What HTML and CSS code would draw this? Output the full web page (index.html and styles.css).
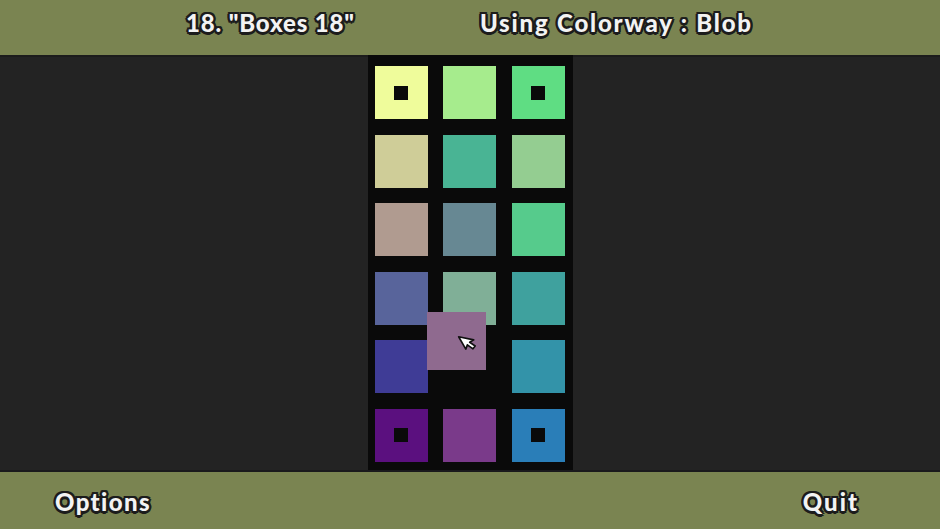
FILE: index.html
```html
<!DOCTYPE html>
<html>
<head>
<meta charset="utf-8">
<link rel="stylesheet" href="styles.css">
</head>
<body>
<div class="app">
  <header class="bar top">
    <span class="title">18. "Boxes 18"</span>
    <span class="colorway">Using Colorway : Blob</span>
  </header>
  <main class="stage">
    <div class="board">
      <div class="tile c11"><i class="dot"></i></div>
      <div class="tile c12"></div>
      <div class="tile c13"><i class="dot"></i></div>
      <div class="tile c21"></div>
      <div class="tile c22"></div>
      <div class="tile c23"></div>
      <div class="tile c31"></div>
      <div class="tile c32"></div>
      <div class="tile c33"></div>
      <div class="tile c41"></div>
      <div class="tile c42"></div>
      <div class="tile c43"></div>
      <div class="tile c51"></div>
      <div class="slot"></div>
      <div class="tile c53"></div>
      <div class="tile c61"><i class="dot"></i></div>
      <div class="tile c62"></div>
      <div class="tile c63"><i class="dot"></i></div>
      <div class="held">
        <svg class="cursor" width="20" height="22" viewBox="0 0 18 20">
          <path d="M2 1.5 L2 14.5 L5.2 11.8 L7.8 17.5 L10.8 16.3 L8.2 10.8 L12.5 10.8 Z" fill="#ffffff" stroke="#111" stroke-width="1.5" stroke-linejoin="round"/>
        </svg>
      </div>
    </div>
  </main>
  <footer class="bar bottom">
    <span class="opt">Options</span>
    <span class="quit">Quit</span>
  </footer>
</div>
</body>
</html>
```
FILE: styles.css
```css
* { box-sizing: border-box; }
html, body { margin: 0; padding: 0; }
body {
  width: 940px;
  height: 529px;
  overflow: hidden;
  background: #222222;
  font-family: "Lato", "DejaVu Sans", sans-serif;
}
.app {
  display: flex;
  flex-direction: column;
  width: 940px;
  height: 529px;
}
.bar {
  background: #7a8451;
  display: flex;
  align-items: center;
  color: #f3f3f3;
  font-weight: 900;
  font-size: 24px;
  text-shadow:
    2.5px 0 0 #1c1c1c, -2.5px 0 0 #1c1c1c, 0 2.5px 0 #1c1c1c, 0 -2.5px 0 #1c1c1c,
    1.8px 1.8px 0 #1c1c1c, -1.8px 1.8px 0 #1c1c1c, 1.8px -1.8px 0 #1c1c1c, -1.8px -1.8px 0 #1c1c1c;
}
.top {
  height: 55px;
  padding-left: 186px;
  padding-bottom: 10px;
}
.title { letter-spacing: 0.85px; }
.top .colorway { margin-left: 125px; letter-spacing: 1.8px; }
.stage {
  height: 417px;
  background: #232323;
  border-top: 2px solid #1c1c1c;
  border-bottom: 2px solid #1a1a1c;
  display: flex;
  justify-content: center;
  align-items: flex-start;
}
.board {
  position: relative;
  margin-top: -2px;
  width: 205px;
  height: 415px;
  background: #0a0a0a;
  padding: 11px 8px 8px 7px;
  display: grid;
  grid-template-columns: repeat(3, 53px);
  grid-template-rows: repeat(6, 53px);
  column-gap: 15.5px;
  row-gap: 15.6px;
}
.tile {
  display: flex;
  align-items: center;
  justify-content: center;
}
.dot {
  display: block;
  width: 14px;
  height: 14px;
  background: #0a0a0a;
}
.c11 { background: #effc9b; }
.c12 { background: #a6ec8d; }
.c13 { background: #5fdd83; }
.c21 { background: #cfcd98; }
.c22 { background: #49b494; }
.c23 { background: #94cd91; }
.c31 { background: #b09b90; }
.c32 { background: #678893; }
.c33 { background: #56cb8c; }
.c41 { background: #58649b; }
.c42 { background: #80af97; }
.c43 { background: #3fa19e; }
.c51 { background: #3f3c96; }
.c53 { background: #3393a9; }
.c61 { background: #5b107f; }
.c62 { background: #7a3a8a; }
.c63 { background: #2a7eb8; }
.held {
  position: absolute;
  left: 59px;
  top: 257px;
  width: 59px;
  height: 58px;
  background: #8f6a8f;
}
.cursor {
  position: absolute;
  left: 33px;
  top: 18px;
  transform: rotate(-30deg);
}
.bottom {
  height: 57px;
  justify-content: space-between;
  padding: 2px 81px 0 55px;
}
.opt { letter-spacing: 1.4px; }
.quit { letter-spacing: 2px; }
```
